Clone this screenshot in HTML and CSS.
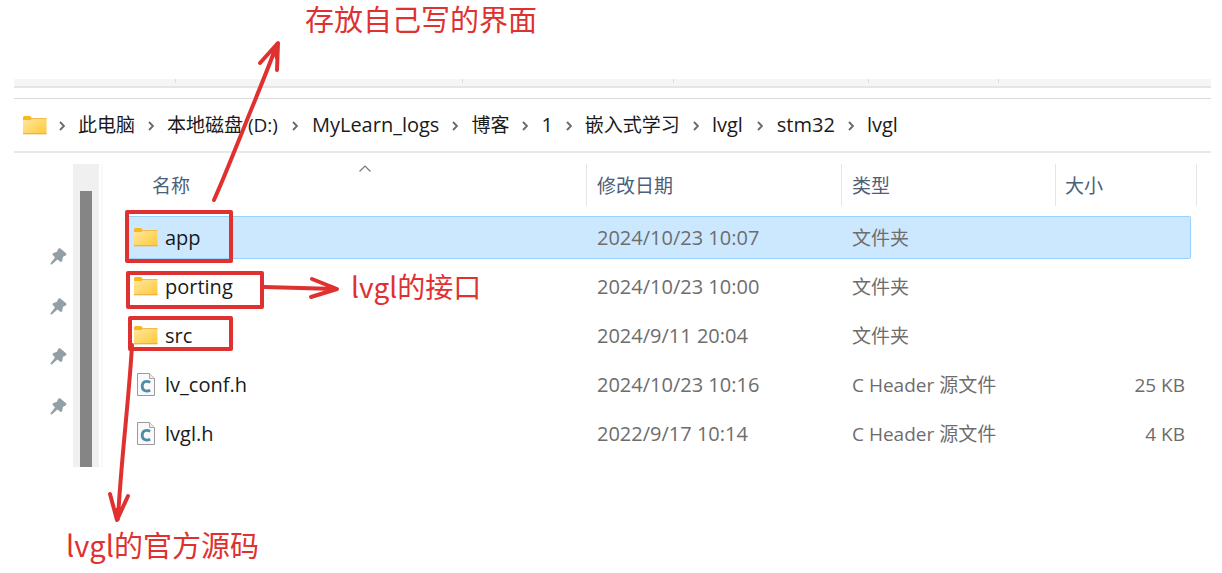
FILE: index.html
```html
<!DOCTYPE html>
<html lang="zh-CN">
<head>
<meta charset="utf-8">
<title>lvgl</title>
<link rel="stylesheet" href="styles.css">
</head>
<body>
<svg class="defs" aria-hidden="true">
  <defs>
    <linearGradient id="folder-fill" x1="0" y1="0" x2="1" y2="1">
      <stop offset="0" stop-color="#ffe8a3"/>
      <stop offset="1" stop-color="#ffc937"/>
    </linearGradient>
    <symbol id="folder" viewBox="0 0 24 19">
      <path d="M0 1.5Q0 0 1.5 0H7L9 2V5H0Z" fill="#f9b81c"/>
      <path d="M0 4H7.5L9.5 2H22.5Q23.5 2 23.5 3V18H0Z" fill="url(#folder-fill)"/>
      <path d="M8.5 2.5H23.5" stroke="#f0bb4a" fill="none"/>
      <path d="M0 17.8H23.5" stroke="#e3a93a" fill="none"/>
    </symbol>
    <symbol id="cfile" viewBox="0 0 18 24">
      <path d="M.5 .5H12.5L17.5 5.5V22.5H.5Z" fill="#f9f9f9" stroke="#9b9b9b"/>
      <path d="M12.5 .5V5.5H17.5" fill="#ececec" stroke="#a8a8a8"/>
      <path d="M13.200 9.400C9 7 5.200 9 5.200 13.200S9 19.200 13.200 17.200" fill="none" stroke="#4c8dab" stroke-width="2.800"/>
    </symbol>
    <symbol id="pin" viewBox="0 0 17 17">
      <path d="M8.200 .8Q9.200 -.2 10.400 .6L16 5.2Q17 6.400 15.800 7.400L13 8.800 12.200 13Q11.400 14.600 10 13.600L7.400 11.400 1.800 16.400Q.3 16.800 .5 15.200L5 9.400 2.800 7Q2.100 5.600 3.600 5L7 3.800Z" fill="#929fa6"/>
    </symbol>
    <symbol id="chev" viewBox="0 0 6 10">
      <path d="M1 1L5 5L1 9" fill="none" stroke="#6a6a6a" stroke-width="1.900"/>
    </symbol>
  </defs>
</svg>

<div class="explorer">
  <div class="strip"><i></i><i></i><i></i><i></i><i></i></div>
  <nav class="crumbs" aria-label="路径">
    <svg class="folder"><use href="#folder"/></svg>
    <svg class="chev first"><use href="#chev"/></svg>
    <a class="cjk" href="#">此电脑</a>
    <svg class="chev"><use href="#chev"/></svg>
    <a class="cjk" href="#">本地磁盘 (D:)</a>
    <svg class="chev wide"><use href="#chev"/></svg>
    <a href="#">MyLearn_logs</a>
    <svg class="chev"><use href="#chev"/></svg>
    <a class="cjk" href="#">博客</a>
    <svg class="chev"><use href="#chev"/></svg>
    <a href="#">1</a>
    <svg class="chev"><use href="#chev"/></svg>
    <a class="cjk" href="#">嵌入式学习</a>
    <svg class="chev"><use href="#chev"/></svg>
    <a href="#">lvgl</a>
    <svg class="chev wide"><use href="#chev"/></svg>
    <a href="#">stm32</a>
    <svg class="chev"><use href="#chev"/></svg>
    <a href="#">lvgl</a>
  </nav>

  <div class="panes">
    <aside class="side">
      <div class="pins">
        <svg><use href="#pin"/></svg>
        <svg><use href="#pin"/></svg>
        <svg><use href="#pin"/></svg>
        <svg><use href="#pin"/></svg>
      </div>
      <div class="track"><div class="thumb"></div></div>
    </aside>
    <main class="files">
      <table>
        <thead>
          <tr>
            <th class="name"><div class="label">名称<svg class="sort" viewBox="0 0 12 7"><path d="M.5 6.500L6 1L11.500 6.500" fill="none" stroke="#777" stroke-width="1.200"/></svg></div></th>
            <th class="date"><div class="label">修改日期</div></th>
            <th class="type"><div class="label">类型</div></th>
            <th class="size"><div class="label">大小</div></th>
          </tr>
        </thead>
        <tbody>
          <tr class="selected">
            <td class="name"><div class="entry"><svg class="folder"><use href="#folder"/></svg>app</div></td>
            <td>2024/10/23 10:07</td><td class="cjk">文件夹</td><td class="num"></td>
          </tr>
          <tr>
            <td class="name"><div class="entry"><svg class="folder"><use href="#folder"/></svg>porting</div></td>
            <td>2024/10/23 10:00</td><td class="cjk">文件夹</td><td class="num"></td>
          </tr>
          <tr>
            <td class="name"><div class="entry"><svg class="folder"><use href="#folder"/></svg>src</div></td>
            <td>2024/9/11 20:04</td><td class="cjk">文件夹</td><td class="num"></td>
          </tr>
          <tr>
            <td class="name"><div class="entry"><svg class="cfile"><use href="#cfile"/></svg>lv_conf.h</div></td>
            <td>2024/10/23 10:16</td><td class="cjk">C Header 源文件</td><td class="num">25 KB</td>
          </tr>
          <tr>
            <td class="name"><div class="entry"><svg class="cfile"><use href="#cfile"/></svg>lvgl.h</div></td>
            <td>2022/9/17 10:14</td><td class="cjk">C Header 源文件</td><td class="num">4 KB</td>
          </tr>
        </tbody>
      </table>
    </main>
  </div>
</div>

<div class="notes">
  <svg class="marks" width="500" height="573" viewBox="0 0 500 573" aria-hidden="true">
    <g fill="none" stroke="#e03131" stroke-width="4" stroke-linecap="round" stroke-linejoin="round">
      <rect x="127" y="212" width="104" height="49"/>
      <rect x="128" y="273" width="134" height="34"/>
      <rect x="130" y="318" width="101" height="31"/>
      <path d="M214 200C224 178 234 152 243 130C254 102 267 72 277 44M260 63L278 43L277 70"/>
      <path d="M264 287Q300 288 336 289M312 279L337 289L311 297"/>
      <path d="M132 345C129 400 121 460 118 519M110 494L117 520L128 496"/>
    </g>
    <path d="M278 43L272 52L276 60ZM337 289L326 286V292ZM117 520L114 508H121Z" fill="#e03131"/>
  </svg>
  <p class="note note-app">存放自己写的界面</p>
  <p class="note note-port">lvgl的接口</p>
  <p class="note note-src">lvgl的官方源码</p>
</div>
</body>
</html>
```
FILE: styles.css
```css
* { box-sizing: border-box; }

body {
  margin: 0;
  position: relative;
  min-height: 100vh;
  background: #fff;
  color: #1a1a1a;
  font: 20px/28px "Open Sans", "Noto Sans CJK SC", sans-serif;
}

.defs { position: absolute; width: 0; height: 0; }

.cjk { font-size: 19px; }

.explorer { padding: 79px 11px 0 14px; }

.strip {
  display: grid;
  grid-template-columns: 162fr 287fr 210fr 195fr 130fr 212fr;
  height: 9px;
  background: #f4f5f7;
  border-bottom: 2px solid #e5e5e5;
}
.strip i { height: 4px; border-right: 1px solid #dcdcdc; }

.crumbs {
  display: flex;
  align-items: center;
  margin-top: 10px;
  height: 55px;
  padding-left: 9px;
  border-top: 1px solid #dadada;
  border-bottom: 2px solid #e8e8e8;
}
.crumbs a { color: #1a1a1a; text-decoration: none; white-space: nowrap; }
.chev { width: 6px; height: 10px; margin: 2px 13px 0; flex: none; }
.chev.first { margin-left: 12px; }
.chev.wide { margin-left: 14px; margin-right: 14px; }

.folder { width: 24px; height: 19px; flex: none; }
.cfile { width: 18px; height: 24px; flex: none; }

.panes { display: flex; padding-top: 11px; }

.side { display: flex; width: 89px; border-right: 2px solid #f8f8f8; }
.pins {
  flex: 1;
  display: flex;
  flex-direction: column;
  gap: 33px;
  align-items: flex-end;
  padding: 84px 6px 0 0;
}
.pins svg { width: 17px; height: 17px; }
.track { width: 26px; margin-right: 2px; padding: 27px 7px 0; background: #f0f0f0; }
.thumb { width: 12px; height: 100%; background: #858585; }

.files { flex: 1; padding: 0 20px 6px 24px; }

table {
  width: 100%;
  margin-top: -6px;
  table-layout: fixed;
  border-collapse: separate;
  border-spacing: 0 6px;
}
th, td { padding: 0; text-align: left; font-weight: 400; white-space: nowrap; }
th { height: 46px; vertical-align: top; font-size: 19px; color: #4c607a; }
th .label {
  position: relative;
  height: 42px;
  padding-left: 10px;
  line-height: 44px;
  border-left: 1px solid #e5e5e5;
}
th.name .label { margin-left: 17px; padding-left: 8px; border-left: 0; }
th.date { width: 255px; }
th.type { width: 214px; }
th.size { width: 136px; }
th.size .label { margin-right: -6px; padding-left: 9px; border-right: 1px solid #e5e5e5; }
.sort { position: absolute; top: 1px; left: 50%; width: 12px; height: 7px; margin-left: -6px; }

td { height: 43px; padding-left: 11px; color: #6d6d6d; }
td.name { padding-left: 7px; color: #1a1a1a; }
td.num { padding: 0 6px 0 0; text-align: right; font-size: 19px; }
.entry { display: flex; align-items: center; gap: 7px; }
.entry .cfile { margin: 0 3px; }

.selected td { background: #cce8ff; border: 1px solid #99d1ff; border-width: 1px 0; }
.selected td:last-child { border-right-width: 1px; border-radius: 0 2px 2px 0; }
.selected td:first-child { border-left-width: 1px; padding-left: 6px; }

.notes { position: absolute; top: 0; left: 0; pointer-events: none; }
.marks { display: block; }
.note {
  position: absolute;
  margin: 0;
  color: #e03131;
  font: 28px/36px "Noto Sans CJK SC", sans-serif;
  white-space: nowrap;
}
.note-app { left: 305px; top: 0; font-size: 29px; }
.note-port { left: 351px; top: 268px; }
.note-src { left: 66px; top: 526px; font-size: 29px; }
```
